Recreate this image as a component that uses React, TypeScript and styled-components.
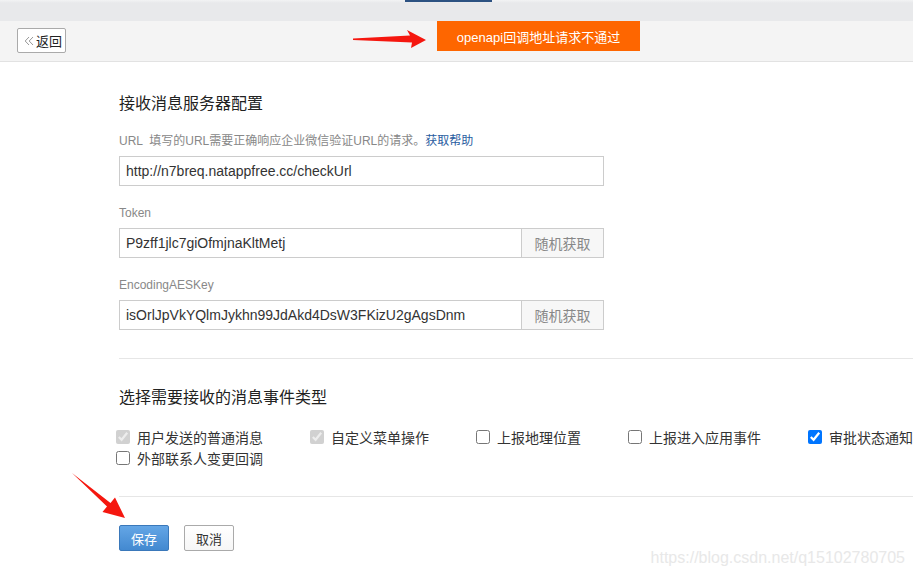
import React from 'react';
import styled, { createGlobalStyle } from 'styled-components';

const GlobalStyle = createGlobalStyle`
  html, body {
    margin: 0;
    padding: 0;
    background: #fff;
    font-family: 'Liberation Sans', 'Noto Sans CJK SC', sans-serif;
    overflow: hidden;
  }
`;

const Page = styled.div`
  position: relative;
  width: 913px;
  height: 576px;
  overflow: hidden;
  background: #fff;
`;

const TopStrip = styled.div`
  height: 21px;
  background: linear-gradient(#f2f3f4, #e8e9eb 3px);
  padding-left: 405px;
  box-sizing: border-box;
`;

const TabMark = styled.div`
  width: 87px;
  height: 2px;
  background: #2c5282;
`;

const Header = styled.div`
  height: 40px;
  background: #f4f4f4;
  border-bottom: 1px solid #e2e2e2;
  display: flex;
  align-items: flex-start;
`;

const BackButton = styled.button`
  margin: 7px 0 0 17px;
  height: 25px;
  width: 49px;
  padding: 0 0 0 6px;
  box-sizing: border-box;
  background: #fff;
  border: 1px solid #aaa;
  border-radius: 2px;
  display: flex;
  align-items: center;
  gap: 2px;
  font-family: 'Noto Sans CJK SC', sans-serif;
  font-size: 13px;
  color: #222;
  cursor: pointer;
`;

const Banner = styled.div`
  margin-left: 371px;
  width: 203px;
  height: 30px;
  background: #fe6600;
  color: #fff;
  font-size: 13px;
  display: flex;
  align-items: center;
  justify-content: center;
`;

const Content = styled.div`
  padding-left: 119px;
`;

const SectionTitle = styled.h2<{ $top: number }>`
  margin: ${(p) => p.$top}px 0 0;
  font-size: 16px;
  font-weight: normal;
  line-height: 24px;
  height: 24px;
  color: #222;
`;

const FieldLabel = styled.div<{ $top: number }>`
  margin-top: ${(p) => p.$top}px;
  font-size: 12px;
  line-height: 18px;
  color: #888;
  white-space: pre;
`;

const HelpLink = styled.a`
  color: #2a5d9f;
  text-decoration: none;
`;

const InputRow = styled.div`
  margin-top: 6px;
  display: flex;
  width: 485px;
  height: 30px;
`;

const TextInput = styled.input`
  flex: 1;
  min-width: 0;
  box-sizing: border-box;
  height: 30px;
  border: 1px solid #ccc;
  padding: 0 6px;
  font-family: 'Liberation Sans', sans-serif;
  font-size: 14px;
  color: #333;
  outline: none;
`;

const AddonButton = styled.button`
  width: 82px;
  height: 30px;
  box-sizing: border-box;
  border: 1px solid #ccc;
  border-left: none;
  background: #f7f7f7;
  color: #888;
  font-family: 'Noto Sans CJK SC', sans-serif;
  font-size: 14px;
  cursor: pointer;
`;

const Divider = styled.hr<{ $top: number }>`
  margin: ${(p) => p.$top}px 0 0;
  border: none;
  border-top: 1px solid #e6e6e6;
  height: 0;
`;

const CheckList = styled.div`
  margin: 16px 0 0 -3px;
  width: 900px;
  display: flex;
  flex-wrap: wrap;
  column-gap: 47px;
`;

const CheckItem = styled.label`
  display: flex;
  align-items: center;
  height: 21px;
  font-family: 'Noto Sans CJK SC', sans-serif;
  font-size: 14px;
  color: #333;
  white-space: nowrap;
`;

const CheckBox = styled.input`
  width: 14px;
  height: 14px;
  margin: 0 7px 0 0;
`;

const ButtonBar = styled.div`
  margin-top: 28px;
  display: flex;
  gap: 15px;
`;

const ActionButton = styled.button<{ $primary?: boolean }>`
  width: 50px;
  height: 26px;
  box-sizing: border-box;
  border-radius: 2px;
  border: 1px solid ${(p) => (p.$primary ? '#3a78ba' : '#aaa')};
  background: ${(p) =>
    p.$primary
      ? 'linear-gradient(#64a6e6, #4389d0)'
      : 'linear-gradient(#fff, #f6f6f6)'};
  color: ${(p) => (p.$primary ? '#fff' : '#333')};
  font-family: 'Noto Sans CJK SC', sans-serif;
  font-size: 13px;
  cursor: pointer;
`;

const Annotation = styled.svg<{ $left: number; $top: number }>`
  position: absolute;
  left: ${(p) => p.$left}px;
  top: ${(p) => p.$top}px;
  pointer-events: none;
`;

const Watermark = styled.div`
  position: absolute;
  right: 8px;
  bottom: 9px;
  font-family: 'Liberation Sans', sans-serif;
  font-size: 16px;
  color: #e8e8e8;
`;

const events = [
  { label: '用户发送的普通消息', checked: true, disabled: true },
  { label: '自定义菜单操作', checked: true, disabled: true },
  { label: '上报地理位置', checked: false, disabled: false },
  { label: '上报进入应用事件', checked: false, disabled: false },
  { label: '审批状态通知', checked: true, disabled: false },
  { label: '外部联系人变更回调', checked: false, disabled: false },
];

function DoubleChevron() {
  return (
    <svg width="10" height="10" viewBox="0 0 10 10" fill="none" stroke="#999" strokeWidth="1">
      <path d="M5 1 L1.2 5 L5 9" />
      <path d="M9 1 L5.2 5 L9 9" />
    </svg>
  );
}

export default function App() {
  return (
    <Page>
      <GlobalStyle />
      <TopStrip>
        <TabMark />
      </TopStrip>
      <Header>
        <BackButton>
          <DoubleChevron />
          返回
        </BackButton>
        <Banner>openapi回调地址请求不通过</Banner>
      </Header>

      <Content>
        <SectionTitle $top={30}>接收消息服务器配置</SectionTitle>

        <FieldLabel $top={16}>
          {'URL  填写的URL需要正确响应企业微信验证URL的请求。'}
          <HelpLink href="#">获取帮助</HelpLink>
        </FieldLabel>
        <InputRow>
          <TextInput defaultValue="http://n7breq.natappfree.cc/checkUrl" />
        </InputRow>

        <FieldLabel $top={18}>Token</FieldLabel>
        <InputRow>
          <TextInput defaultValue="P9zff1jlc7giOfmjnaKltMetj" />
          <AddonButton>随机获取</AddonButton>
        </InputRow>

        <FieldLabel $top={18}>EncodingAESKey</FieldLabel>
        <InputRow>
          <TextInput defaultValue="isOrlJpVkYQlmJykhn99JdAkd4DsW3FKizU2gAgsDnm" />
          <AddonButton>随机获取</AddonButton>
        </InputRow>

        <Divider $top={28} />

        <SectionTitle $top={27}>选择需要接收的消息事件类型</SectionTitle>
        <CheckList>
          {events.map((e) => (
            <CheckItem key={e.label}>
              <CheckBox type="checkbox" defaultChecked={e.checked} disabled={e.disabled} />
              {e.label}
            </CheckItem>
          ))}
        </CheckList>

        <Divider $top={28} />

        <ButtonBar>
          <ActionButton $primary>保存</ActionButton>
          <ActionButton>取消</ActionButton>
        </ButtonBar>
      </Content>

      <Annotation $left={350} $top={28} width="80" height="24" viewBox="0 0 80 24">
        <polygon points="3,10.5 60,7.5 57,2 76,12 61,20 62,14.5 3,12" fill="#f5170f" />
      </Annotation>
      <Annotation $left={60} $top={465} width="72" height="62" viewBox="0 0 72 62">
        <polygon points="12,8 50.5,38 55,32.5 65,53 42.5,47 47,41.5" fill="#f5170f" />
      </Annotation>

      <Watermark>https://blog.csdn.net/q15102780705</Watermark>
    </Page>
  );
}
